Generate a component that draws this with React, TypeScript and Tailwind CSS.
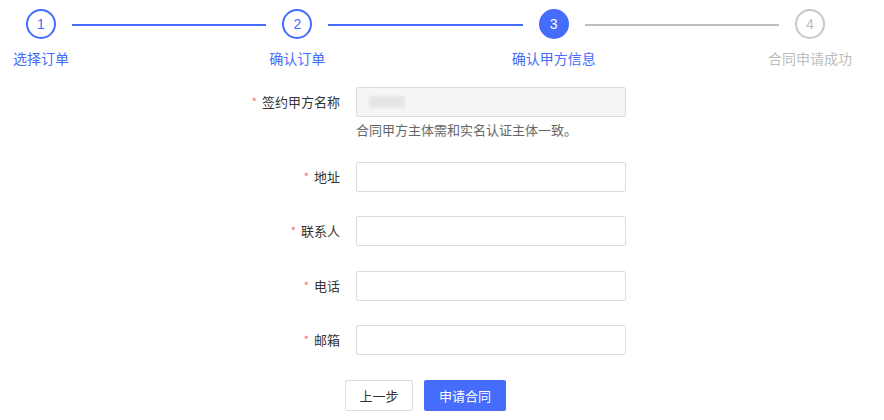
import React from "react";

const steps = [
  { n: 1, label: "选择订单", state: "done" },
  { n: 2, label: "确认订单", state: "done" },
  { n: 3, label: "确认甲方信息", state: "active" },
  { n: 4, label: "合同申请成功", state: "todo" },
];

const fields = [
  { label: "地址", mt: "mt-[22px]" },
  { label: "联系人", mt: "mt-[24px]" },
  { label: "电话", mt: "mt-[25px]" },
  { label: "邮箱", mt: "mt-[24px]" },
];

function Step({ n, label, state }: { n: number; label: string; state: string }) {
  const circle =
    state === "active"
      ? "bg-[#456cfa] border-[#456cfa] text-white"
      : state === "done"
        ? "border-[#456cfa] text-[#456cfa] bg-white"
        : "border-[#c8c8c8] text-[#bdbdbd] bg-white";
  return (
    <div className="flex w-[82px] shrink-0 flex-col items-center">
      <div
        className={`flex h-[30px] w-[30px] items-center justify-center rounded-full border-2 text-[14px] font-['Liberation_Sans',sans-serif] ${circle}`}
      >
        {n}
      </div>
      <div
        className={`mt-[9px] whitespace-nowrap text-[14px] leading-[20px] ${
          state === "todo" ? "text-[#bdbdbd]" : "text-[#456cfa]"
        }`}
      >
        {label}
      </div>
    </div>
  );
}

function Label({ text }: { text: string }) {
  return (
    <label className="flex w-[136px] shrink-0 items-center justify-end pr-[16px] text-[13px] text-[#333]">
      <span className="mr-[5px] -translate-y-[1px] text-[11px] text-[#f56c6c]">*</span>
      {text}
    </label>
  );
}

export default function App() {
  return (
    <div className="h-[420px] w-[884px] bg-white font-['Noto_Sans_CJK_SC','Noto_Sans',sans-serif]">
      <div className="flex w-[851px] pt-[9px]">
        {steps.map((s, i) => (
          <React.Fragment key={s.n}>
            {i > 0 && (
              <div
                className={`mx-[-10px] mt-[15px] h-[2px] flex-1 ${
                  s.state === "todo" ? "bg-[#bfbfbf]" : "bg-[#456cfa]"
                }`}
              />
            )}
            <Step {...s} />
          </React.Fragment>
        ))}
      </div>

      <div className="ml-[220px] mt-[19px] flex flex-col">
        <div className="flex items-center">
          <Label text="签约甲方名称" />
          <div className="flex h-[30px] w-[270px] items-center rounded-[2px] border border-[#dcdcdc] bg-[#f5f5f5] px-[12px]">
            <span className="h-[12px] w-[36px] bg-[#e6e6e6] blur-[1px]" />
          </div>
        </div>
        <div className="ml-[136px] mt-[3px] text-[13px] leading-[20px] text-[#666]">
          合同甲方主体需和实名认证主体一致。
        </div>

        {fields.map((f) => (
          <div key={f.label} className={`flex items-center ${f.mt}`}>
            <Label text={f.label} />
            <input
              type="text"
              className="h-[30px] w-[270px] rounded-[2px] border border-[#dcdcdc] bg-white px-[12px] text-[13px] outline-none"
            />
          </div>
        ))}

        <div className="ml-[125px] mt-[25px] flex gap-[11px]">
          <button className="h-[31px] w-[68px] rounded-[2px] border border-[#dcdcdc] bg-white text-[13px] text-[#333]">
            上一步
          </button>
          <button className="h-[31px] w-[82px] rounded-[2px] bg-[#456cfa] text-[13px] text-white">
            申请合同
          </button>
        </div>
      </div>
    </div>
  );
}
